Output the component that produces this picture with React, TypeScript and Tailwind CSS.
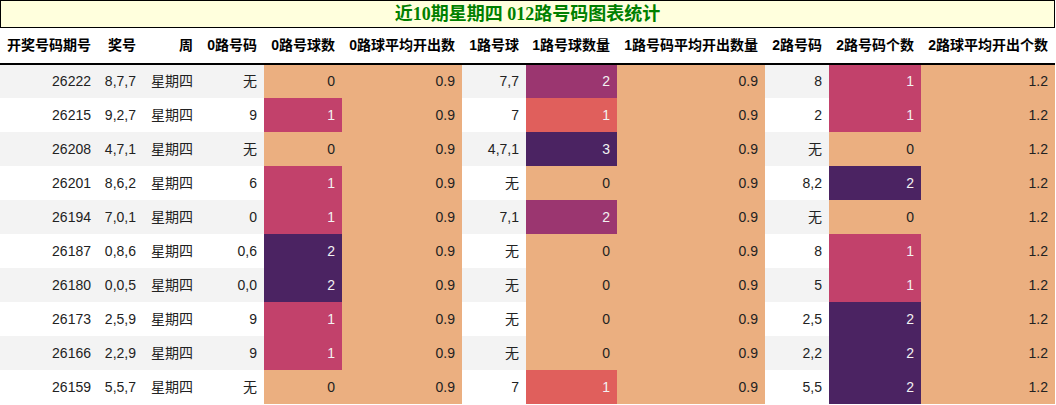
import React from "react";

const ORANGE = "bg-[#ebaf80] text-[#222]";
const PINK = "bg-[#c2416b] text-[#f2f2f2]";
const PURPLE = "bg-[#4b2362] text-[#f2f2f2]";
const MAGENTA = "bg-[#9b3670] text-[#f2f2f2]";
const SALMON = "bg-[#e05f5c] text-[#f2f2f2]";

// max 2 palette
const scale2: Record<string, string> = { "0": ORANGE, "1": PINK, "2": PURPLE };
// max 3 palette
const scale3: Record<string, string> = { "0": ORANGE, "1": SALMON, "2": MAGENTA, "3": PURPLE };

const headers = [
  "开奖号码期号",
  "奖号",
  "周",
  "0路号码",
  "0路号球数",
  "0路球平均开出数",
  "1路号球",
  "1路号球数量",
  "1路号码平均开出数量",
  "2路号码",
  "2路号码个数",
  "2路球平均开出个数",
];

const widths = [
  "w-[98px]",
  "w-[45px]",
  "w-[57px]",
  "w-[64px]",
  "w-[78px]",
  "w-[120px]",
  "w-[64px]",
  "w-[91px]",
  "w-[148px]",
  "w-[64px]",
  "w-[92px]",
  "w-[134px]",
];

const rows = [
  ["26222", "8,7,7", "星期四", "无", "0", "0.9", "7,7", "2", "0.9", "8", "1", "1.2"],
  ["26215", "9,2,7", "星期四", "9", "1", "0.9", "7", "1", "0.9", "2", "1", "1.2"],
  ["26208", "4,7,1", "星期四", "无", "0", "0.9", "4,7,1", "3", "0.9", "无", "0", "1.2"],
  ["26201", "8,6,2", "星期四", "6", "1", "0.9", "无", "0", "0.9", "8,2", "2", "1.2"],
  ["26194", "7,0,1", "星期四", "0", "1", "0.9", "7,1", "2", "0.9", "无", "0", "1.2"],
  ["26187", "0,8,6", "星期四", "0,6", "2", "0.9", "无", "0", "0.9", "8", "1", "1.2"],
  ["26180", "0,0,5", "星期四", "0,0", "2", "0.9", "无", "0", "0.9", "5", "1", "1.2"],
  ["26173", "2,5,9", "星期四", "9", "1", "0.9", "无", "0", "0.9", "2,5", "2", "1.2"],
  ["26166", "2,2,9", "星期四", "9", "1", "0.9", "无", "0", "0.9", "2,2", "2", "1.2"],
  ["26159", "5,5,7", "星期四", "无", "0", "0.9", "7", "1", "0.9", "5,5", "2", "1.2"],
];

function cellColor(col: number, v: string, stripe: string) {
  if (col === 4 || col === 10) return scale2[v];
  if (col === 7) return scale3[v];
  if (col === 5 || col === 8 || col === 11) return ORANGE;
  return stripe + " text-[#222]";
}

export default function App() {
  return (
    <div className="w-[1056px] h-[405px] bg-white font-['Liberation_Sans','Noto_Sans_CJK_SC',sans-serif] overflow-hidden">
      <div className="h-[28px] w-[1055px] border border-black bg-[#ffffdd] flex items-center justify-center">
        <span className="text-[18px] font-bold text-[#008000] font-['Liberation_Serif','Noto_Sans_CJK_SC',serif] leading-none">
          近10期星期四 012路号码图表统计
        </span>
      </div>
      <table className="table-fixed border-collapse w-[1055px] text-[14px]">
        <colgroup>
          {widths.map((w, i) => (
            <col key={i} className={w} />
          ))}
        </colgroup>
        <thead>
          <tr className="h-[36px] border-b-2 border-black">
            {headers.map((h) => (
              <th key={h} className="text-right pr-[7px] pl-0 font-bold text-black whitespace-nowrap">
                {h}
              </th>
            ))}
          </tr>
        </thead>
        <tbody>
          {rows.map((r, ri) => {
            const stripe = ri % 2 === 0 ? "bg-[#f3f3f3]" : "bg-white";
            return (
              <tr key={r[0]} className="h-[34px]">
                {r.map((v, ci) => (
                  <td key={ci} className={`text-right pr-[7px] pl-0 whitespace-nowrap ${cellColor(ci, v, stripe)}`}>
                    {v}
                  </td>
                ))}
              </tr>
            );
          })}
        </tbody>
      </table>
    </div>
  );
}
